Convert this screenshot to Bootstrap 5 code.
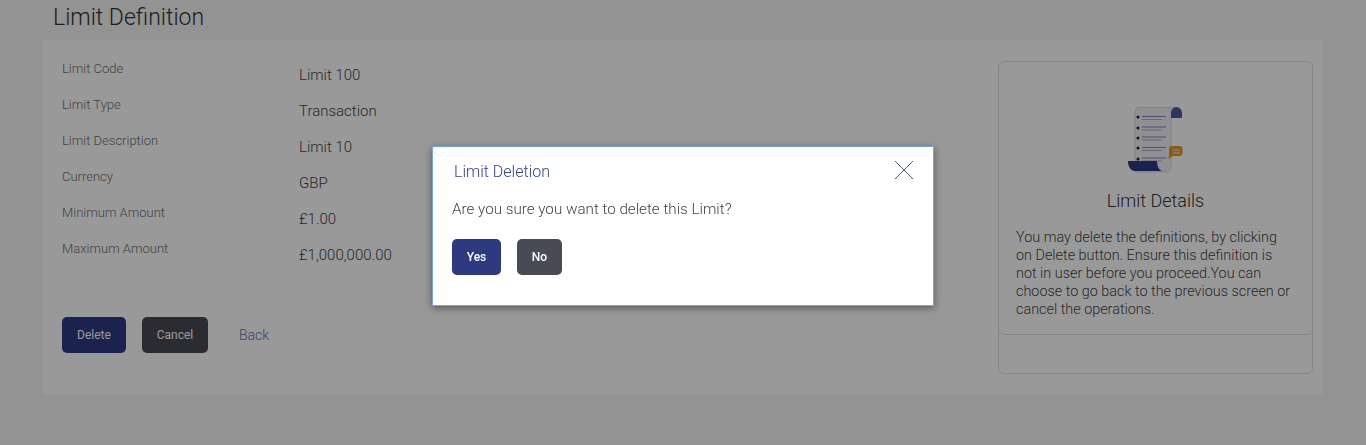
<!DOCTYPE html>
<html lang="en">
<head>
  <meta charset="UTF-8" />
  <meta name="viewport" content="width=device-width, initial-scale=1.0"/>
  <title>Limit Definition</title>
  <link href="https://cdn.jsdelivr.net/npm/bootstrap@5.3.0/dist/css/bootstrap.min.css" rel="stylesheet">
  <style>
    body {
      background-color: #f5f5f5;
      font-family: Roboto, "Liberation Sans", sans-serif;
      font-weight: 300;
      height: 445px;
      overflow: hidden;
    }

    .page-wrap {
      padding: 0 43px;
    }

    .page-title {
      font-size: 23px;
      font-weight: 300;
      line-height: 26px;
      color: #333;
      margin: 0;
      padding: 5px 0 9px 10px;
    }

    .limit-panel {
      background: #fff;
      height: 354px;
      padding: 17px 10px 0 19px;
    }

    .limit-row {
      height: 36px;
    }

    .limit-label {
      width: 237px;
      font-size: 13px;
      line-height: 24px;
      color: #707070;
    }

    .limit-value {
      font-size: 15px;
      line-height: 36px;
      color: #444;
    }

    .limit-actions {
      margin-top: 44px;
    }

    .act-btn {
      height: 36px;
      font-size: 12px;
      font-weight: 500;
      border: none;
      border-radius: 5px;
      color: #fff;
      padding: 0;
    }

    .act-btn:hover {
      color: #fff;
    }

    .act-light {
      font-weight: 400;
    }

    .btn-navy { background-color: #2d3a82; }
    .btn-navy:hover { background-color: #2d3a82; }
    .btn-slate { background-color: #484a54; }
    .btn-slate:hover { background-color: #484a54; }

    .back-link {
      font-size: 14px;
      color: #5f70b4;
      text-decoration: none;
      margin-left: 31px;
    }

    .help-card {
      width: 315px;
      height: 313px;
      margin-top: 4px;
      border-color: #dcdcdc;
      border-radius: 6px;
      background: #fff;
    }

    .help-inner {
      height: 273px;
      margin: 0;
      border: 0;
      border-bottom: 1px solid #dcdcdc;
      border-radius: 6px;
      padding: 45px 17px 0;
    }

    .help-title {
      font-size: 18px;
      font-weight: 300;
      line-height: 24px;
      color: #333;
      margin: 16px 0;
      text-align: center;
    }

    .help-text {
      font-size: 14.4px;
      line-height: 18px;
      color: #444;
      margin: 0;
      padding-right: 3px;
    }

    .modal-backdrop.show {
      opacity: 0.4;
    }

    .delete-box {
      position: fixed;
      left: 432px;
      top: 146px;
      width: 502px;
      height: 160px;
      z-index: 1060;
      background: #fff;
      border: 1px solid #6ea6f5;
      box-shadow: 0 2px 8px rgba(0,0,0,0.45);
      padding: 14px 19px 0;
    }

    .delete-title {
      font-size: 16px;
      font-weight: 300;
      line-height: 22px;
      color: #34438f;
      padding-left: 2px;
      margin: 0;
    }

    .delete-close {
      background: none;
      border: 0;
      padding: 0;
      line-height: 0;
      margin-top: -4px;
    }

    .delete-text {
      font-size: 15.2px;
      line-height: 20px;
      color: #444;
      margin: 16px 0 20px;
    }
  </style>
</head>
<body>
  <div class="page-wrap">
    <h1 class="page-title">Limit Definition</h1>
    <div class="limit-panel d-flex justify-content-between">
      <div>
        <div class="limit-row d-flex"><div class="limit-label">Limit Code</div><div class="limit-value">Limit 100</div></div>
        <div class="limit-row d-flex"><div class="limit-label">Limit Type</div><div class="limit-value">Transaction</div></div>
        <div class="limit-row d-flex"><div class="limit-label">Limit Description</div><div class="limit-value">Limit 10</div></div>
        <div class="limit-row d-flex"><div class="limit-label">Currency</div><div class="limit-value">GBP</div></div>
        <div class="limit-row d-flex"><div class="limit-label">Minimum Amount</div><div class="limit-value">£1.00</div></div>
        <div class="limit-row d-flex"><div class="limit-label">Maximum Amount</div><div class="limit-value">£1,000,000.00</div></div>
        <div class="limit-actions d-flex align-items-center">
          <button class="btn act-btn act-light btn-navy me-3" style="width: 64px">Delete</button>
          <button class="btn act-btn act-light btn-slate" style="width: 66px">Cancel</button>
          <a href="#" class="back-link">Back</a>
        </div>
      </div>
      <div class="card help-card">
        <div class="card help-inner">
          <svg class="d-block mx-auto" width="58" height="66" viewBox="0 0 58 66">
            <path d="M12 .5h36c-3 0-4 3-4 6V60c0 3-2 5-5 5H8V54H8V5c0-3 2-4.500 4-4.500z" fill="#f1f1f4" stroke="#d4d6e6" stroke-width="1"/>
            <path d="M44 11V6c0-3 2.500-6 5.500-6S55 3 55 6v5z" fill="#4a5aa8"/>
            <g fill="#222"><circle cx="11" cy="10" r="1.500"/><circle cx="11" cy="21" r="1.500"/><circle cx="11" cy="31" r="1.500"/><circle cx="11" cy="41" r="1.500"/><circle cx="11" cy="52" r="1.500"/></g>
            <g stroke="#7f82c4" stroke-width="1.200"><path d="M15 9.500h24M15 20h24M15 30h24M15 40.500h24M15 51h24"/></g>
            <g stroke="#a9abc8" stroke-width="1.200"><path d="M15 12.500h20M15 23h20M15 33h20M15 43.500h20M15 54h20"/></g>
            <path d="M44 39h9c1.500 0 2.500 1 2.500 3v4c0 2-1 3-2.500 3h-7l-5 3 1-3v-7c0-2 1-3 2-3z" fill="#e39a35"/>
            <path d="M46 43h7M46 46h7" stroke="#f8e4c0" stroke-width="1"/>
            <path d="M1 54h29c0 4 1 8 5 10H8c-4 0-7-4-7-10z" fill="#2b3a85"/>
          </svg>
          <h2 class="help-title">Limit Details</h2>
          <p class="help-text">You may delete the definitions, by clicking on Delete button. Ensure this definition is not in user before you proceed.You can choose to go back to the previous screen or cancel the operations.</p>
        </div>
      </div>
    </div>
  </div>

  <div class="modal-backdrop show"></div>

  <!-- delete confirm -->
  <div class="delete-box">
    <div class="d-flex justify-content-between align-items-center">
      <h5 class="delete-title">Limit Deletion</h5>
      <button type="button" class="delete-close" aria-label="Close">
        <svg width="20" height="20" viewBox="0 0 20 20"><path d="M1 1l18 18M19 1L1 19" stroke="#4a5a8c" stroke-width="1" fill="none"/></svg>
      </button>
    </div>
    <p class="delete-text">Are you sure you want to delete this Limit?</p>
    <div class="d-flex">
      <button class="btn act-btn btn-navy" style="width: 49px; margin-right: 16px">Yes</button>
      <button class="btn act-btn btn-slate" style="width: 45px">No</button>
    </div>
  </div>

  <script src="https://cdn.jsdelivr.net/npm/bootstrap@5.3.0/dist/js/bootstrap.bundle.min.js"></script>
</body>
</html>
